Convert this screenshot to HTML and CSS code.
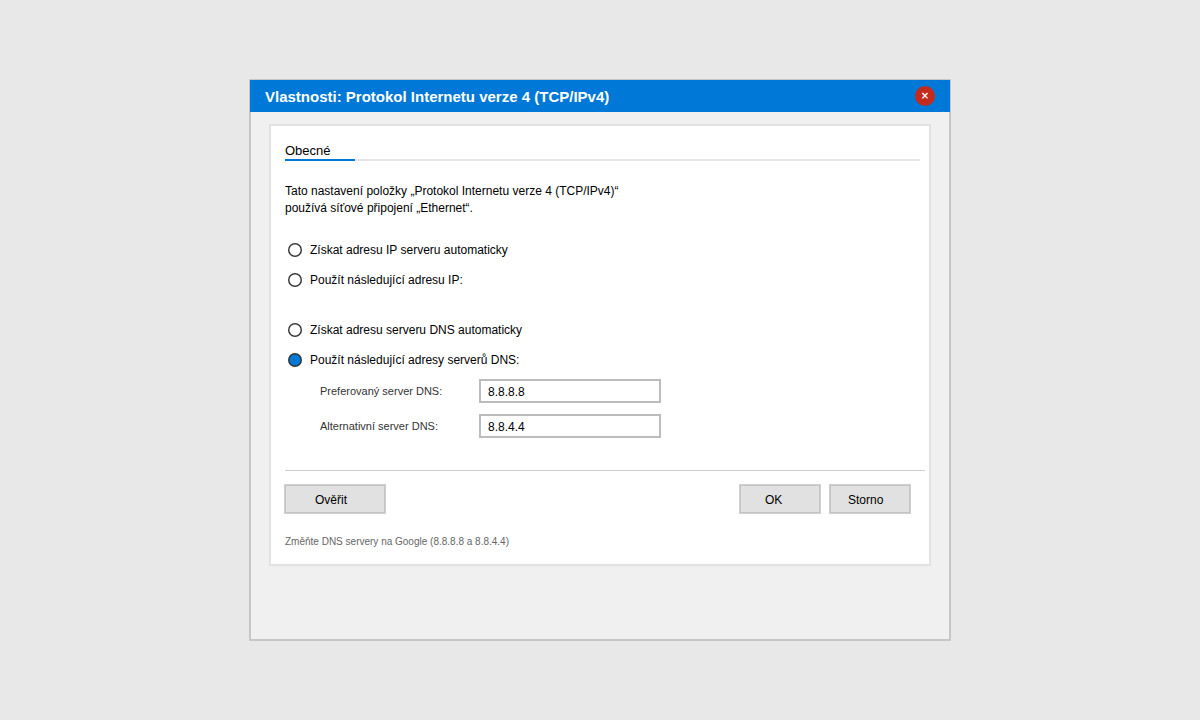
FILE: index.html
```html
<!DOCTYPE html>
<html lang="cs">
<head>
    <meta charset="UTF-8">
    <meta name="viewport" content="width=device-width, initial-scale=1.0">
    <title>Vlastnosti: Protokol Internetu verze 4 (TCP/IPv4)</title>
    <link rel="stylesheet" href="styles.css">
</head>
<body>
    <main class="dialog">
        <header class="title-bar">
            <h1>Vlastnosti: Protokol Internetu verze 4 (TCP/IPv4)</h1>
            <button type="button" class="close" aria-label="Zavřít">×</button>
        </header>

        <form class="panel">
            <nav class="tabs">
                <a href="#obecne" class="tab">Obecné</a>
            </nav>

            <p class="intro">Tato nastavení položky „Protokol Internetu verze 4 (TCP/IPv4)“<br>používá síťové připojení „Ethernet“.</p>

            <div class="options">
                <label class="option"><input type="radio" name="ip"> Získat adresu IP serveru automaticky</label>
                <label class="option"><input type="radio" name="ip"> Použít následující adresu IP:</label>
            </div>

            <div class="options">
                <label class="option"><input type="radio" name="dns"> Získat adresu serveru DNS automaticky</label>
                <label class="option"><input type="radio" name="dns" checked> Použít následující adresy serverů DNS:</label>
            </div>

            <div class="fields">
                <label for="dns1">Preferovaný server DNS:</label>
                <input type="text" id="dns1" value="8.8.8.8">
                <label for="dns2">Alternativní server DNS:</label>
                <input type="text" id="dns2" value="8.8.4.4">
            </div>

            <div class="actions">
                <button type="button" class="btn verify">Ověřit</button>
                <button type="submit" class="btn ok">OK</button>
                <button type="button" class="btn cancel">Storno</button>
            </div>

            <p class="note">Změňte DNS servery na Google (8.8.8.8 a 8.8.4.4)</p>
        </form>
    </main>
</body>
</html>
```
FILE: styles.css
```css
* {
    box-sizing: border-box;
}
body {
    margin: 0;
    min-height: 100vh;
    display: flex;
    align-items: center;
    justify-content: center;
    background: #e8e8e8;
    color: #000;
    font-family: "Liberation Sans", Arial, sans-serif;
    font-size: 12px;
}
h1, p {
    margin: 0;
}
input, button {
    font: inherit;
    color: inherit;
    margin: 0;
}
.dialog {
    width: 100%;
    max-width: 702px;
    padding-bottom: 73px;
    background: #f0f0f0;
    border: 2px solid #c6c6c6;
}
.title-bar {
    display: flex;
    align-items: center;
    justify-content: space-between;
    height: 32px;
    margin: -1px -1px 12px;
    padding: 0 15px;
    background: #0078d7;
    color: #fff;
}
.title-bar h1 {
    padding-top: 2px;
    font-size: 15px;
    line-height: 30px;
}
.close {
    width: 20px;
    height: 20px;
    padding: 0;
    border: none;
    border-radius: 50%;
    background: #c42b1c;
    font-family: "DejaVu Sans", sans-serif;
    font-size: 10px;
    font-weight: bold;
    line-height: 20px;
}
.panel {
    margin: 0 18px;
    padding: 15px 4px 14px 14px;
    background: #fff;
    border: 2px solid #e2e2e2;
}
.tabs {
    display: flex;
    margin-right: 5px;
    border-bottom: 2px solid #e6e6e6;
}
.tab {
    width: 70px;
    margin-bottom: -2px;
    padding-top: 2px;
    border-bottom: 2px solid #0078d7;
    color: #000;
    font-size: 13px;
    line-height: 16px;
    text-decoration: none;
}
.intro {
    margin: 22px 0 23px;
    line-height: 17px;
}
.options {
    display: grid;
    gap: 10px;
    margin-bottom: 30px;
}
.option {
    display: flex;
    align-items: center;
    gap: 8px;
    padding-left: 3px;
    line-height: 20px;
}
.option input {
    appearance: none;
    width: 14px;
    height: 14px;
    border-radius: 50%;
    background: radial-gradient(circle, #fff 5px, #333 6px);
}
.option input:checked {
    background: radial-gradient(circle, #0078d7 5px, #333 6px);
}
.options + .options {
    margin-bottom: 9px;
}
.fields {
    display: grid;
    grid-template-columns: 159px 182px;
    gap: 11px 0;
    align-items: center;
    padding-left: 35px;
}
.fields label {
    color: #333;
    font-size: 11px;
}
.fields input {
    height: 24px;
    padding: 2px 7px 0;
    border: 2px solid #bcbcbc;
    background: #fff;
}
.actions {
    display: flex;
    gap: 8px;
    margin-top: 32px;
    padding: 13px 14px 0 0;
    border-top: 1px solid #ccc;
}
.btn {
    width: 82px;
    height: 30px;
    padding: 1px 0 0 25px;
    border: 1px solid #d0d0d0;
    background: #e1e1e1;
    box-shadow: inset 0 0 0 1px #c4c4c4;
    text-align: left;
}
.verify {
    width: 102px;
    margin: 0 auto 0 -1px;
    padding-left: 30px;
}
.cancel {
    padding-left: 18px;
}
.note {
    margin-top: 20px;
    color: #666;
    font-size: 10px;
    line-height: 16px;
}
```
